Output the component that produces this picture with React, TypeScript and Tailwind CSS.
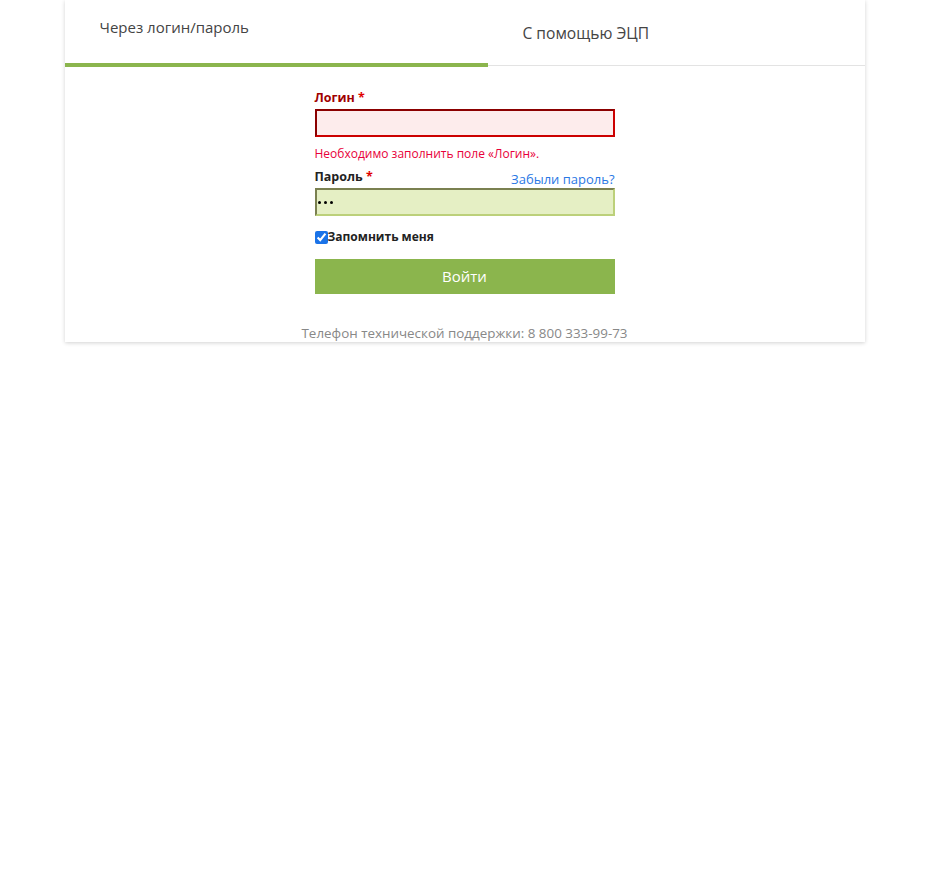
import React from "react";

export default function App() {
  return (
    <div className="min-h-[888px] bg-white" style={{ fontFamily: '"Open Sans", "Noto Sans", sans-serif' }}>
      <div className="mx-auto w-[800px] bg-white shadow-[0_1px_4px_rgba(0,0,0,0.18)]">
        <div className="flex h-[66px] border-b border-[#e3e3e3]">
          <div className="w-[423px] h-[67px] shrink-0 border-b-[4px] border-[#8bb54d] pl-[35px] pt-[16px] text-[15px] text-[#444]">
            Через логин/пароль
          </div>
          <div className="flex-1 h-[65px] pl-[35px] pt-[22px] text-[15.6px] text-[#444]">
            С помощью ЭЦП
          </div>
        </div>
        <div className="w-[300px] mx-auto pt-[23px]">
          <div className="text-[12.5px] font-bold text-[#a00000] leading-[18px]">
            Логин <span className="text-[#e00000]">*</span>
          </div>
          <div className="mt-[2px] h-[28px] bg-[#fdecec] border-2 border-t-[#8b0000] border-l-[#8b0000] border-b-[#cc0000] border-r-[#cc0000]" />
          <div className="mt-[9px] text-[12px] leading-[16px] text-[#e8003a]">
            Необходимо заполнить поле «Логин».
          </div>
          <div className="mt-[6px] flex items-end justify-between">
            <div className="text-[12.5px] font-bold text-[#222] leading-[18px]">
              Пароль <span className="text-[#e00000]">*</span>
            </div>
            <a className="text-[13px] text-[#2a78e4] leading-[18px] translate-y-[2px]">Забыли пароль?</a>
          </div>
          <div className="mt-[2px] h-[28px] bg-[#e5efc4] border-2 border-t-[#7a8050] border-l-[#7a8050] border-b-[#bcd07a] border-r-[#bcd07a] flex items-center gap-[3px] pl-[1px]">
            <span className="w-[3px] h-[3px] rounded-full bg-black" />
            <span className="w-[3px] h-[3px] rounded-full bg-black" />
            <span className="w-[3px] h-[3px] rounded-full bg-black" />
          </div>
          <label className="mt-[12px] flex items-center text-[12px] font-bold text-[#222] leading-[18px]">
            <input type="checkbox" defaultChecked className="w-[13px] h-[13px] m-0 accent-[#1a73e8]" />
            <span>Запомнить меня</span>
          </label>
          <button className="mt-[13px] w-full h-[35px] bg-[#8bb54d] text-white text-[15px]">
            Войти
          </button>
        </div>
        <div className="mt-[30px] text-center text-[13.4px] text-[#888] leading-[18px]">
          Телефон технической поддержки: 8 800 333-99-73
        </div>
      </div>
    </div>
  );
}
